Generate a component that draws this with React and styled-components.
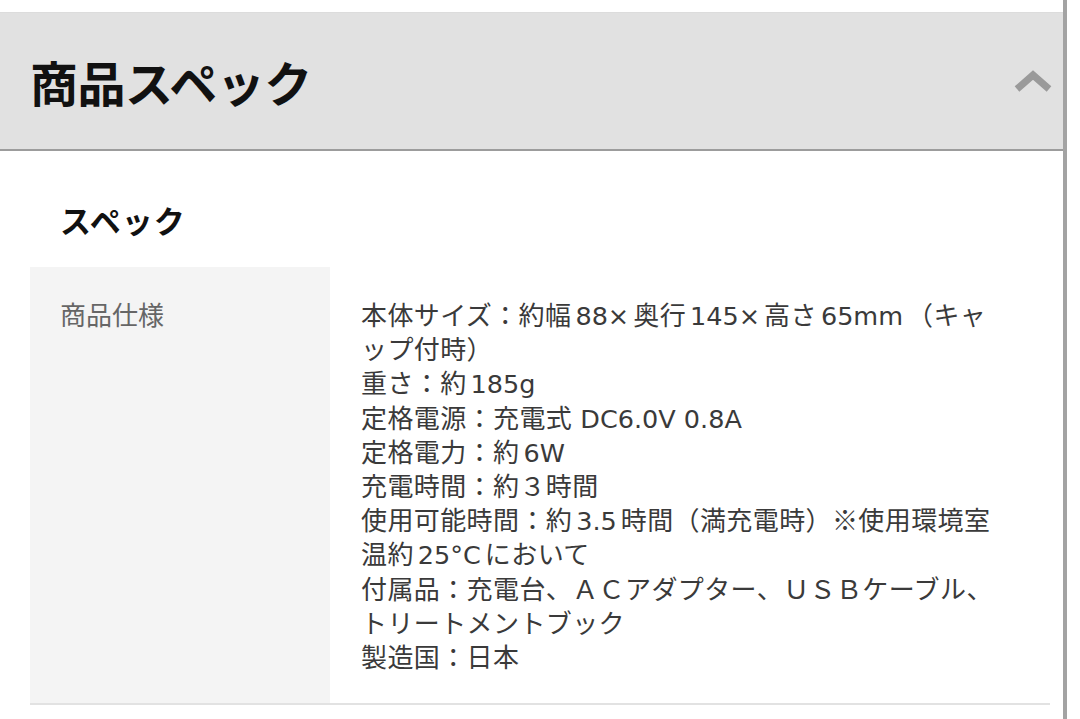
import React from 'react';
import styled, { createGlobalStyle } from 'styled-components';

const GlobalStyle = createGlobalStyle`
  html, body {
    margin: 0;
    padding: 0;
    background: #fff;
  }
  body {
    font-family: "Noto Sans CJK JP", "Noto Sans", sans-serif;
  }
`;

const Page = styled.div`
  display: flex;
  width: 1080px;
  height: 719px;
  overflow: hidden;
`;

const Main = styled.div`
  flex: 1;
  display: flex;
  flex-direction: column;
`;

const Scrollbar = styled.div`
  width: 4px;
  background: #a3a3a3;
  margin-right: 13px;
`;

const TopGap = styled.div`
  height: 12px;
  border-bottom: 1px solid #dcdcdc;
`;

const AccordionHeader = styled.div`
  height: 136px;
  background: #e1e1e1;
  border-bottom: 2px solid #9c9c9c;
  display: flex;
  align-items: center;
  justify-content: space-between;
  padding: 0 10px 0 30px;
`;

const HeaderTitle = styled.h2`
  margin: 0;
  font-size: 48px;
  font-weight: 700;
  color: #111;
  letter-spacing: -0.5px;
  line-height: 1;
`;

const Body = styled.div`
  padding: 46px 13px 0 30px;
`;

const SectionTitle = styled.h3`
  margin: 0 0 25px 30px;
  font-size: 31px;
  font-weight: 700;
  letter-spacing: 1px;
  line-height: 45px;
  color: #111;
`;

const SpecTable = styled.div`
  display: grid;
  grid-template-columns: 300px 1fr;
  border-bottom: 2px solid #e2e2e2;
`;

const Label = styled.div`
  background: #f4f4f4;
  padding: 30px 30px;
  font-size: 26px;
  line-height: 34px;
  color: #666;
`;

const Value = styled.div`
  padding: 30px 30px 30px 31px;
  font-size: 26px;
  letter-spacing: 0.4px;
  color: #3a3a3a;
`;

const Line = styled.div`
  height: 34.2px;
  line-height: 34.2px;
  white-space: nowrap;
`;

const Latin = styled.span`
  font-family: "DejaVu Sans", "Noto Sans CJK JP", sans-serif;
  font-size: 25.5px;
  letter-spacing: 0;
  line-height: 1;
  margin-left: ${p => (p.$before ? '4px' : '0')};
  margin-right: ${p => (p.$after ? '4px' : '0')};
`;

const Chevron = () => (
  <svg width="40" height="24" viewBox="0 0 40 24">
    <polyline
      points="4,20 20,6 36,20"
      fill="none"
      stroke="#9a9a9a"
      strokeWidth="7"
      strokeLinejoin="miter"
    />
  </svg>
);

const specLines = [
  '本体サイズ：約幅88×奥行145×高さ65mm（キャ',
  'ップ付時）',
  '重さ：約185g',
  '定格電源：充電式 DC6.0V 0.8A',
  '定格電力：約6W',
  '充電時間：約３時間',
  '使用可能時間：約3.5時間（満充電時）※使用環境室',
  '温約25°Cにおいて',
  '付属品：充電台、ＡＣアダプター、ＵＳＢケーブル、',
  'トリートメントブック',
  '製造国：日本',
];

// latin runs get a little space next to kana/kanji, like the iOS autospace
const renderLine = (text) => {
  const parts = text.split(/([0-9A-Za-z.°× ]+)/).filter(Boolean);
  return parts.map((part, i) => {
    if (!/^[0-9A-Za-z.°× ]+$/.test(part)) return part;
    const before = i > 0 && !part.startsWith(' ');
    const after = i < parts.length - 1 && !part.endsWith(' ');
    return (
      <Latin key={i} $before={before} $after={after}>
        {part}
      </Latin>
    );
  });
};

export default function App() {
  return (
    <>
      <GlobalStyle />
      <Page>
        <Main>
          <TopGap />
          <AccordionHeader>
            <HeaderTitle>商品スペック</HeaderTitle>
            <Chevron />
          </AccordionHeader>
          <Body>
            <SectionTitle>スペック</SectionTitle>
            <SpecTable>
              <Label>商品仕様</Label>
              <Value>
                {specLines.map((line, i) => (
                  <Line key={i}>{renderLine(line)}</Line>
                ))}
              </Value>
            </SpecTable>
          </Body>
        </Main>
        <Scrollbar />
      </Page>
    </>
  );
}
